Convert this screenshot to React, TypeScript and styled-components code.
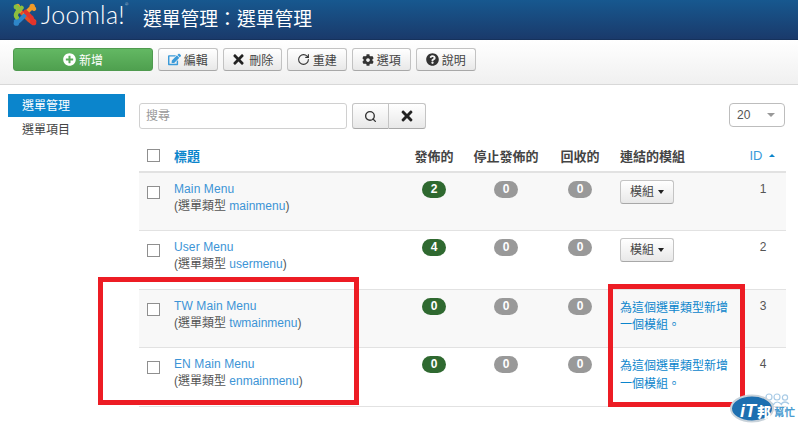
import React from "react";
import styled, { createGlobalStyle } from "styled-components";
import { FaPlusCircle, FaEdit, FaTimes, FaCog, FaQuestionCircle } from "react-icons/fa";
import { RotateCw, Search } from "lucide-react";

const Global = createGlobalStyle`
  html, body { margin: 0; padding: 0; background: #fff; overflow: hidden; }
  body { font-family: "Liberation Sans", "Noto Sans CJK TC", sans-serif; font-size: 12px; color: #444; }
`;

const Page = styled.div`
  position: relative;
  width: 800px;
  height: 428px;
  padding-right: 2px;
  box-sizing: border-box;
  overflow: hidden;
`;

const Header = styled.header`
  height: 39px;
  display: flex;
  align-items: center;
  background: linear-gradient(#17588f, #1a3a6b);
  border-bottom: 1px solid #16325c;
  color: #fff;
`;

const Brand = styled.div`
  display: flex;
  align-items: center;
  align-self: flex-start;
  width: 143px;
  padding: 2px 0 0 13px;
  box-sizing: border-box;
  height: 27px;
`;

const BrandName = styled.span`
  font-family: "Lato", "Liberation Sans", sans-serif;
  font-weight: 300;
  font-size: 25px;
  line-height: 25px;
  margin-left: 4px;
  letter-spacing: 0.3px;
  position: relative;
`;

const Registered = styled.sup`
  font-size: 4px;
  position: absolute;
  top: -1px;
  line-height: 8px;
`;

const Title = styled.h1`
  margin: 0;
  font-size: 18.8px;
  font-weight: 400;
  line-height: 24px;
  white-space: nowrap;
`;

const Toolbar = styled.div`
  height: 45px;
  box-sizing: border-box;
  display: flex;
  align-items: flex-start;
  gap: 5px;
  padding: 8px 0 0 13px;
  background: linear-gradient(#ffffff, #f0f0f0);
  border-bottom: 1px solid #d8d8d8;
`;

const ToolButton = styled.button`
  height: 23px;
  width: 59.5px;
  box-sizing: border-box;
  margin: 0;
  padding: 0;
  display: flex;
  align-items: center;
  justify-content: center;
  gap: 3px;
  font: inherit;
  font-size: 12px;
  color: #444;
  border: 1px solid #c2c2c2;
  border-bottom-color: #a8a8a8;
  border-radius: 3px;
  background: linear-gradient(#ffffff, #e8e8e8);
`;

const GreenButton = styled(ToolButton)`
  width: 140px;
  color: #fff;
  border-color: #4f9a4f;
  background: linear-gradient(#63b863, #4fa04f);
`;

const Main = styled.div`
  display: flex;
  align-items: flex-start;
`;

const Sidebar = styled.nav`
  width: 117px;
  margin: 9px 14px 0 8px;
  flex: none;
`;

const SideItem = styled.div<{ $active?: boolean }>`
  height: 23px;
  line-height: 24px;
  padding-left: 14px;
  margin-bottom: 1px;
  font-size: 12px;
  color: ${(p) => (p.$active ? "#fff" : "#444")};
  background: ${(p) => (p.$active ? "#0b85cc" : "transparent")};
`;

const Content = styled.div`
  width: 647px;
  flex: none;
`;

const FilterBar = styled.div`
  display: flex;
  align-items: flex-start;
  padding-top: 18px;
  height: 37px;
`;

const SearchInput = styled.div`
  width: 208px;
  height: 26px;
  box-sizing: border-box;
  border: 1px solid #d0d0d0;
  border-radius: 3px;
  padding-left: 6px;
  line-height: 25px;
  color: #999;
  font-size: 12px;
  background: #fff;
`;

const SearchGroup = styled.div`
  display: flex;
  margin-left: 5px;
  height: 26px;
`;

const SearchBtn = styled.button`
  width: 37px;
  height: 26px;
  box-sizing: border-box;
  padding: 0;
  display: flex;
  align-items: center;
  justify-content: center;
  color: #333;
  background: linear-gradient(#ffffff, #e8e8e8);
  border: 1px solid #c4c4c4;
  border-bottom-color: #a8a8a8;
  border-radius: 3px 0 0 3px;
`;

const ClearBtn = styled(SearchBtn)`
  border-left: none;
  border-radius: 0 3px 3px 0;
`;

const Select = styled.div`
  margin-left: auto;
  margin-right: 1px;
  width: 56px;
  height: 24px;
  box-sizing: border-box;
  border: 1px solid #bdbdbd;
  border-radius: 4px;
  display: flex;
  align-items: center;
  justify-content: space-between;
  padding: 0 9px 0 7px;
  font-size: 12px;
  color: #555;
`;

const SelectCaret = styled.span`
  width: 0;
  height: 0;
  border-left: 4px solid transparent;
  border-right: 4px solid transparent;
  border-top: 4px solid #999;
`;

const Table = styled.table`
  width: 647px;
  table-layout: fixed;
  border-collapse: collapse;
`;

const Th = styled.th<{ $left?: boolean }>`
  height: 32px;
  padding: 0;
  font-size: 13px;
  font-weight: 700;
  color: #444;
  text-align: ${(p) => (p.$left ? "left" : "center")};
  border-bottom: 2px solid #e2e2e2;
  box-sizing: border-box;
  vertical-align: middle;
`;

const ModulesTh = styled(Th)`
  padding-left: 3px;
`;

const IdTh = styled(Th)`
  padding-right: 5px;
`;

const SortLink = styled.span`
  color: #0b85cc;
`;

const IdLink = styled.span`
  color: #3a9ad9;
  font-weight: 400;
  font-size: 13px;
`;

const SortCaret = styled.span`
  display: inline-block;
  width: 0;
  height: 0;
  margin: 0 0 3px 6px;
  border-left: 3.5px solid transparent;
  border-right: 3.5px solid transparent;
  border-bottom: 3.5px solid #0b85cc;
`;

const Row = styled.tr<{ $odd?: boolean }>`
  height: 58.5px;
  background: ${(p) => (p.$odd ? "#f8f8f8" : "#fff")};
`;

const Td = styled.td<{ $center?: boolean }>`
  padding: 8px 0 0;
  vertical-align: top;
  text-align: ${(p) => (p.$center ? "center" : "left")};
  border-bottom: 1px solid #e2e2e2;
  line-height: 17px;
  font-size: 12px;
  box-sizing: border-box;
`;

const TitleCell = styled(Td)`
  padding-top: 8px;
  color: #555;
`;

const ModulesCell = styled(Td)`
  padding: 7px 0 0 3px;
`;

const IdCell = styled(Td)`
  padding-right: 3px;
`;

const CheckCell = styled(Td)`
  padding: 13px 0 0 8px;
`;

const Check = styled.span`
  display: block;
  width: 11px;
  height: 11px;
  border: 1px solid #8f8f8f;
  background: #fff;
`;

const HeadCheck = styled(Check)`
  margin-left: 8px;
`;

const Link = styled.a`
  color: #3c94d6;
`;

const NameLink = styled(Link)`
  display: block;
  letter-spacing: 0.1px;
`;

const Badge = styled.span<{ $green?: boolean }>`
  display: inline-block;
  width: 24px;
  height: 17px;
  line-height: 17px;
  border-radius: 9px;
  font-size: 12px;
  font-weight: 700;
  color: #fff;
  text-align: center;
  background: ${(p) => (p.$green ? "#2f6930" : "#999")};
`;

const ModuleBtn = styled.button`
  width: 54px;
  height: 24px;
  margin: 0;
  box-sizing: border-box;
  padding: 0;
  display: flex;
  align-items: center;
  justify-content: center;
  gap: 4px;
  font: inherit;
  font-size: 12px;
  color: #444;
  border: 1px solid #c4c4c4;
  border-bottom-color: #a8a8a8;
  border-radius: 3px;
  background: linear-gradient(#ffffff, #e8e8e8);
`;

const DownCaret = styled.span`
  width: 0;
  height: 0;
  border-left: 3.5px solid transparent;
  border-right: 3.5px solid transparent;
  border-top: 4px solid #222;
`;

const AddLink = styled.a`
  display: block;
  color: #0b85cc;
  line-height: 17.5px;
  width: 112px;
  margin-top: 3px;
`;

const IdText = styled.span`
  font-size: 12px;
  color: #555;
`;

const RedBox = styled.div<{ $x: number; $y: number; $w: number; $h: number }>`
  position: absolute;
  left: ${(p) => p.$x}px;
  top: ${(p) => p.$y}px;
  width: ${(p) => p.$w}px;
  height: ${(p) => p.$h}px;
  box-sizing: border-box;
  border: 5px solid #ed1c24;
`;

const Watermark = styled.svg`
  position: absolute;
  left: 730px;
  top: 391px;
`;

const JoomlaLogo = () => (
  <svg width="24" height="24" viewBox="0 0 25 25">
    <g fill="none" strokeWidth="4.4" strokeLinecap="round" strokeLinejoin="round">
      <path d="M6 7 L17 18 Q20 21 22 19" stroke="#e44d26" />
      <path d="M7 8 Q3 5 5 3" stroke="#f29f2e" />
      <path d="M12 12 L18 6 Q21 4 22 6" stroke="#f09a28" />
      <path d="M12 13 L7 18 Q4 21 3 19" stroke="#2e86c9" />
      <path d="M9 5 L4 10 Q2 13 4 15" stroke="#8cbf3f" />
      <path d="M13 9 L18 14 Q21 16 20 20" stroke="#e2342c" />
    </g>
    <circle cx="20" cy="3.6" r="2.8" fill="#f09a28" />
    <circle cx="3.5" cy="4" r="2.8" fill="#8cbf3f" />
    <circle cx="3.5" cy="21" r="2.8" fill="#2e86c9" />
    <circle cx="21.5" cy="20.5" r="2.8" fill="#e2342c" />
  </svg>
);

const ItBadge = () => (
  <Watermark width="70" height="37" viewBox="0 0 70 37">
    <g fill="none" stroke="#a9cbe6" strokeWidth="1.2">
      <circle cx="39" cy="6" r="3" />
      <circle cx="47" cy="6" r="3" />
      <circle cx="55" cy="6.5" r="2.6" />
      <path d="M34 14 Q39 8 44 14" />
      <path d="M43 14 Q47 8 52 14" />
      <path d="M51 13 Q55 9 59 13" />
    </g>
    <ellipse cx="22" cy="17.5" rx="21" ry="13" fill="#1d6fb0" stroke="#c8d2da" strokeWidth="2" />
    <text x="10" y="26" fontFamily="Liberation Sans, Noto Sans CJK TC, sans-serif" fontWeight="700" fill="#fff">
      <tspan fontSize="18" fontStyle="italic">iT</tspan>
      <tspan fontSize="14" fontWeight="900" dx="1">邦</tspan>
    </text>
    <text x="44" y="25" fontFamily="Noto Sans CJK TC, sans-serif" fontSize="10.5" fontWeight="700" fill="#4a9bd0">幫忙</text>
  </Watermark>
);

const rows = [
  { name: "Main Menu", type: "mainmenu", pub: 2, id: 1, modules: true },
  { name: "User Menu", type: "usermenu", pub: 4, id: 2, modules: true },
  { name: "TW Main Menu", type: "twmainmenu", pub: 0, id: 3, modules: false },
  { name: "EN Main Menu", type: "enmainmenu", pub: 0, id: 4, modules: false },
];

export default function App() {
  return (
    <Page>
      <Global />
      <Header>
        <Brand>
          <JoomlaLogo />
          <BrandName>
            Joomla!<Registered>®</Registered>
          </BrandName>
        </Brand>
        <Title>選單管理：選單管理</Title>
      </Header>
      <Toolbar>
        <GreenButton><FaPlusCircle size={13} />新增</GreenButton>
        <ToolButton><FaEdit size={13} color="#3a9ad9" />編輯</ToolButton>
        <ToolButton><FaTimes size={15} color="#222" />刪除</ToolButton>
        <ToolButton><RotateCw size={13} color="#333" strokeWidth={2} />重建</ToolButton>
        <ToolButton><FaCog size={12} color="#333" />選項</ToolButton>
        <ToolButton><FaQuestionCircle size={13} color="#333" />說明</ToolButton>
      </Toolbar>
      <Main>
        <Sidebar>
          <SideItem $active>選單管理</SideItem>
          <SideItem>選單項目</SideItem>
        </Sidebar>
        <Content>
          <FilterBar>
            <SearchInput>搜尋</SearchInput>
            <SearchGroup>
              <SearchBtn><Search size={13} strokeWidth={2.5} /></SearchBtn>
              <ClearBtn><FaTimes size={16} color="#222" /></ClearBtn>
            </SearchGroup>
            <Select>20<SelectCaret /></Select>
          </FilterBar>
          <Table>
            <colgroup>
              <col width="35" />
              <col width="225" />
              <col width="70" />
              <col width="74" />
              <col width="74" />
              <col width="126" />
              <col width="43" />
            </colgroup>
            <thead>
              <tr>
                <Th $left><HeadCheck /></Th>
                <Th $left><SortLink>標題</SortLink></Th>
                <Th>發佈的</Th>
                <Th>停止發佈的</Th>
                <Th>回收的</Th>
                <ModulesTh $left>連結的模組</ModulesTh>
                <IdTh><IdLink>ID</IdLink><SortCaret /></IdTh>
              </tr>
            </thead>
            <tbody>
              {rows.map((r, i) => (
                <Row key={r.id} $odd={i % 2 === 0}>
                  <CheckCell><Check /></CheckCell>
                  <TitleCell>
                    <NameLink>{r.name}</NameLink>
                    (選單類型 <Link>{r.type}</Link>)
                  </TitleCell>
                  <Td $center><Badge $green>{r.pub}</Badge></Td>
                  <Td $center><Badge>0</Badge></Td>
                  <Td $center><Badge>0</Badge></Td>
                  <ModulesCell>
                    {r.modules ? (
                      <ModuleBtn>模組<DownCaret /></ModuleBtn>
                    ) : (
                      <AddLink>為這個選單類型新增一個模組。</AddLink>
                    )}
                  </ModulesCell>
                  <IdCell $center><IdText>{r.id}</IdText></IdCell>
                </Row>
              ))}
            </tbody>
          </Table>
        </Content>
      </Main>
      <RedBox $x={98} $y={277} $w={261} $h={128} />
      <RedBox $x={608} $y={284} $w={137} $h={123} />
      <ItBadge />
    </Page>
  );
}
